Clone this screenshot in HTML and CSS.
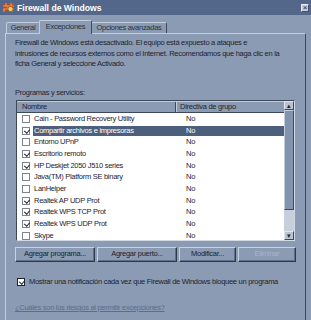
FILE: index.html
```html
<!DOCTYPE html>
<html lang="es">
<head>
    <meta charset="UTF-8">
    <title>Firewall de Windows</title>
    <link rel="stylesheet" href="styles.css">
</head>
<body>
    <div class="window">
        <div class="titlebar">
            <svg class="app-icon" width="11" height="11" viewBox="0 0 11 11">
                <rect x="0" y="1" width="11" height="9" fill="#c8461e"/>
                <path d="M0 4h11M0 7h11M3 1v3M8 1v3M5 4v3M1 7v3M9 7v3" stroke="#f0b070" stroke-width="0.8"/>
                <circle cx="7.5" cy="7" r="2.6" fill="#e9d06a" stroke="#6a3a10" stroke-width="0.6"/>
            </svg>
            <span class="title">Firewall de Windows</span>
            <span class="close">×</span>
        </div>

        <div class="tabs">
            <div class="tab t-gen">General</div>
            <div class="tab t-exc active">Excepciones</div>
            <div class="tab t-opt">Opciones avanzadas</div>
        </div>

        <div class="panel">
            <p class="intro">Firewall de Windows está desactivado. El equipo está expuesto a ataques e<br>intrusiones de recursos externos como el Internet. Recomendamos que haga clic en la<br>ficha General y seleccione Activado.</p>

            <div class="label">Programas y servicios:</div>

            <div class="listbox">
                <div class="list-main">
                    <div class="list-head">
                        <span class="col-name">Nombre</span>
                        <span class="col-policy">Directiva de grupo</span>
                    </div>
                    <div class="rows">
                        <div class="row"><span class="cb"></span><span class="name">Cain - Password Recovery Utility</span><span class="policy">No</span></div>
                        <div class="row selected"><span class="cb checked"></span><span class="name">Compartir archivos e impresoras</span><span class="policy">No</span></div>
                        <div class="row"><span class="cb"></span><span class="name">Entorno UPnP</span><span class="policy">No</span></div>
                        <div class="row"><span class="cb checked"></span><span class="name">Escritorio remoto</span><span class="policy">No</span></div>
                        <div class="row"><span class="cb checked"></span><span class="name">HP Deskjet 2050 J510 series</span><span class="policy">No</span></div>
                        <div class="row"><span class="cb"></span><span class="name">Java(TM) Platform SE binary</span><span class="policy">No</span></div>
                        <div class="row"><span class="cb"></span><span class="name">LanHelper</span><span class="policy">No</span></div>
                        <div class="row"><span class="cb checked"></span><span class="name">Realtek AP UDP Prot</span><span class="policy">No</span></div>
                        <div class="row"><span class="cb checked"></span><span class="name">Realtek WPS TCP Prot</span><span class="policy">No</span></div>
                        <div class="row"><span class="cb checked"></span><span class="name">Realtek WPS UDP Prot</span><span class="policy">No</span></div>
                        <div class="row"><span class="cb"></span><span class="name">Skype</span><span class="policy">No</span></div>
                    </div>
                </div>
                <div class="scrollbar">
                    <div class="arrow">▴</div>
                    <div class="thumb"></div>
                    <div class="track"></div>
                    <div class="arrow">▾</div>
                </div>
            </div>

            <div class="buttons">
                <div class="btn w-prog">Agregar programa...</div>
                <div class="btn w-port">Agregar puerto...</div>
                <div class="btn w-mod">Modificar...</div>
                <div class="btn w-del disabled">Eliminar</div>
            </div>

            <div class="notify"><span class="cb big checked"></span>Mostrar una notificación cada vez que Firewall de Windows bloquee un programa</div>

            <a class="link" href="#">¿Cuáles son los riesgos al permitir excepciones?</a>
        </div>
    </div>
</body>
</html>
```

FILE: styles.css
```css
* {
    margin: 0;
    padding: 0;
    box-sizing: border-box;
}

body {
    font-family: 'Liberation Sans', Arial, sans-serif;
    font-size: 7.5px;
    letter-spacing: -0.28px;
    color: #1e2330;
    background: #8a9bb3;
    width: 311px;
    height: 320px;
    overflow: hidden;
}

.window {
    width: 311px;
    height: 320px;
    background: #8a9bb3;
}

.titlebar {
    height: 15px;
    display: flex;
    align-items: center;
    padding: 0 2px 0 3px;
    background: #53678a;
}

.app-icon {
    margin-right: 3px;
}

.title {
    flex: 1;
    color: #fff;
    font-weight: bold;
    font-size: 8.6px;
    letter-spacing: 0;
}

.close {
    width: 8px;
    height: 8px;
    background: #c9ccd3;
    border: 1px solid #e8eaee;
    border-right-color: #4a5160;
    border-bottom-color: #4a5160;
    color: #222;
    font-size: 8px;
    line-height: 6px;
    text-align: center;
    letter-spacing: 0;
}

.tabs {
    height: 18px;
    display: flex;
    align-items: flex-end;
    padding-left: 6px;
}

.tab {
    height: 11px;
    line-height: 10px;
    text-align: center;
    white-space: nowrap;
    border: 1px solid #c3cedc;
    border-bottom: none;
    border-right-color: #3e4a5c;
    border-radius: 2px 2px 0 0;
    color: #2a3140;
}

.tab.active {
    height: 14px;
    line-height: 12px;
    margin: 0 -1px -1px -1px;
    background: #8a9bb3;
    position: relative;
    z-index: 1;
}

.t-gen { width: 34px; }
.t-exc { width: 53px; }
.t-opt { width: 76px; }

.panel {
    margin: 0 5px 0 5px;
    height: 290px;
    border: 1px solid #c3cedc;
    border-right-color: #3e4a5c;
    border-bottom: none;
    padding: 4px 0 0 9px;
}

.intro {
    line-height: 10.5px;
    white-space: nowrap;
}

.label {
    margin-top: 18px;
    line-height: 10.5px;
}

.listbox {
    margin: 2px 0 0 1px;
    width: 279px;
    height: 141px;
    display: flex;
    border: 1px solid #3e4756;
    border-right-color: #d2dae4;
    border-bottom-color: #d2dae4;
    background: #fff;
    overflow: hidden;
}

.list-main {
    flex: 1;
    overflow: hidden;
}

.list-head {
    height: 12px;
    display: flex;
    background: #8a9bb3;
    border-top: 1px solid #c3cedc;
    border-bottom: 1px solid #3e4a5c;
    line-height: 10px;
}

.col-name {
    width: 159px;
    padding-left: 5px;
    border-right: 1px solid #3e4a5c;
    box-shadow: 1px 0 0 #c3cedc;
}

.col-policy {
    padding-left: 4px;
}

.row {
    height: 11.7px;
    display: flex;
    align-items: center;
}

.cb {
    width: 8px;
    height: 8px;
    margin: 0 3px 0 5px;
    border: 1px solid #7d8592;
    background: #fff;
    flex-shrink: 0;
    position: relative;
}

.cb.checked::after {
    content: "";
    position: absolute;
    left: 1.5px;
    top: 0;
    width: 2.5px;
    height: 4px;
    border: solid #1a1e28;
    border-width: 0 1.3px 1.3px 0;
    transform: rotate(40deg);
}

.name {
    width: 148px;
    height: 10px;
    line-height: 10px;
    padding-left: 1px;
    white-space: nowrap;
}

.policy {
    flex: 1;
    height: 10px;
    line-height: 10px;
    padding-left: 5px;
}

.row.selected .name,
.row.selected .policy {
    background: #4c5f7d;
    color: #fff;
}

.scrollbar {
    width: 10px;
    display: flex;
    flex-direction: column;
    background: #c6cfdb;
}

.arrow {
    height: 9px;
    background: #b9c3d1;
    border: 1px solid #e2e7ee;
    border-right-color: #3e4a5c;
    border-bottom-color: #3e4a5c;
    font-size: 7px;
    line-height: 7px;
    text-align: center;
    color: #1e2330;
}

.thumb {
    height: 100px;
    background: #8193ad;
    border: 1px solid #c3cedc;
    border-right-color: #3e4a5c;
    border-bottom-color: #3e4a5c;
}

.track {
    flex: 1;
}

.buttons {
    display: flex;
    gap: 2px;
    margin-top: 6px;
}

.btn {
    height: 15px;
    line-height: 12px;
    text-align: center;
    white-space: nowrap;
    border: 1px solid #c8d2df;
    border-right-color: #2f3948;
    border-bottom-color: #2f3948;
    box-shadow: inset -1px -1px 0 #5f6f88;
    color: #1e2330;
}

.w-prog { width: 80px; }
.w-port { width: 80px; }
.w-mod { width: 57px; }
.w-del { width: 58px; }

.btn.disabled {
    color: #a9b6c8;
}

.notify {
    display: flex;
    align-items: center;
    margin-top: 15px;
    line-height: 10px;
    white-space: nowrap;
}

.cb.big {
    margin: 0 4px 0 2px;
    border: 1px solid #1e2330;
}

.link {
    display: block;
    margin-top: 16px;
    color: #5d6d8a;
    text-decoration: underline;
    line-height: 10px;
}
```
